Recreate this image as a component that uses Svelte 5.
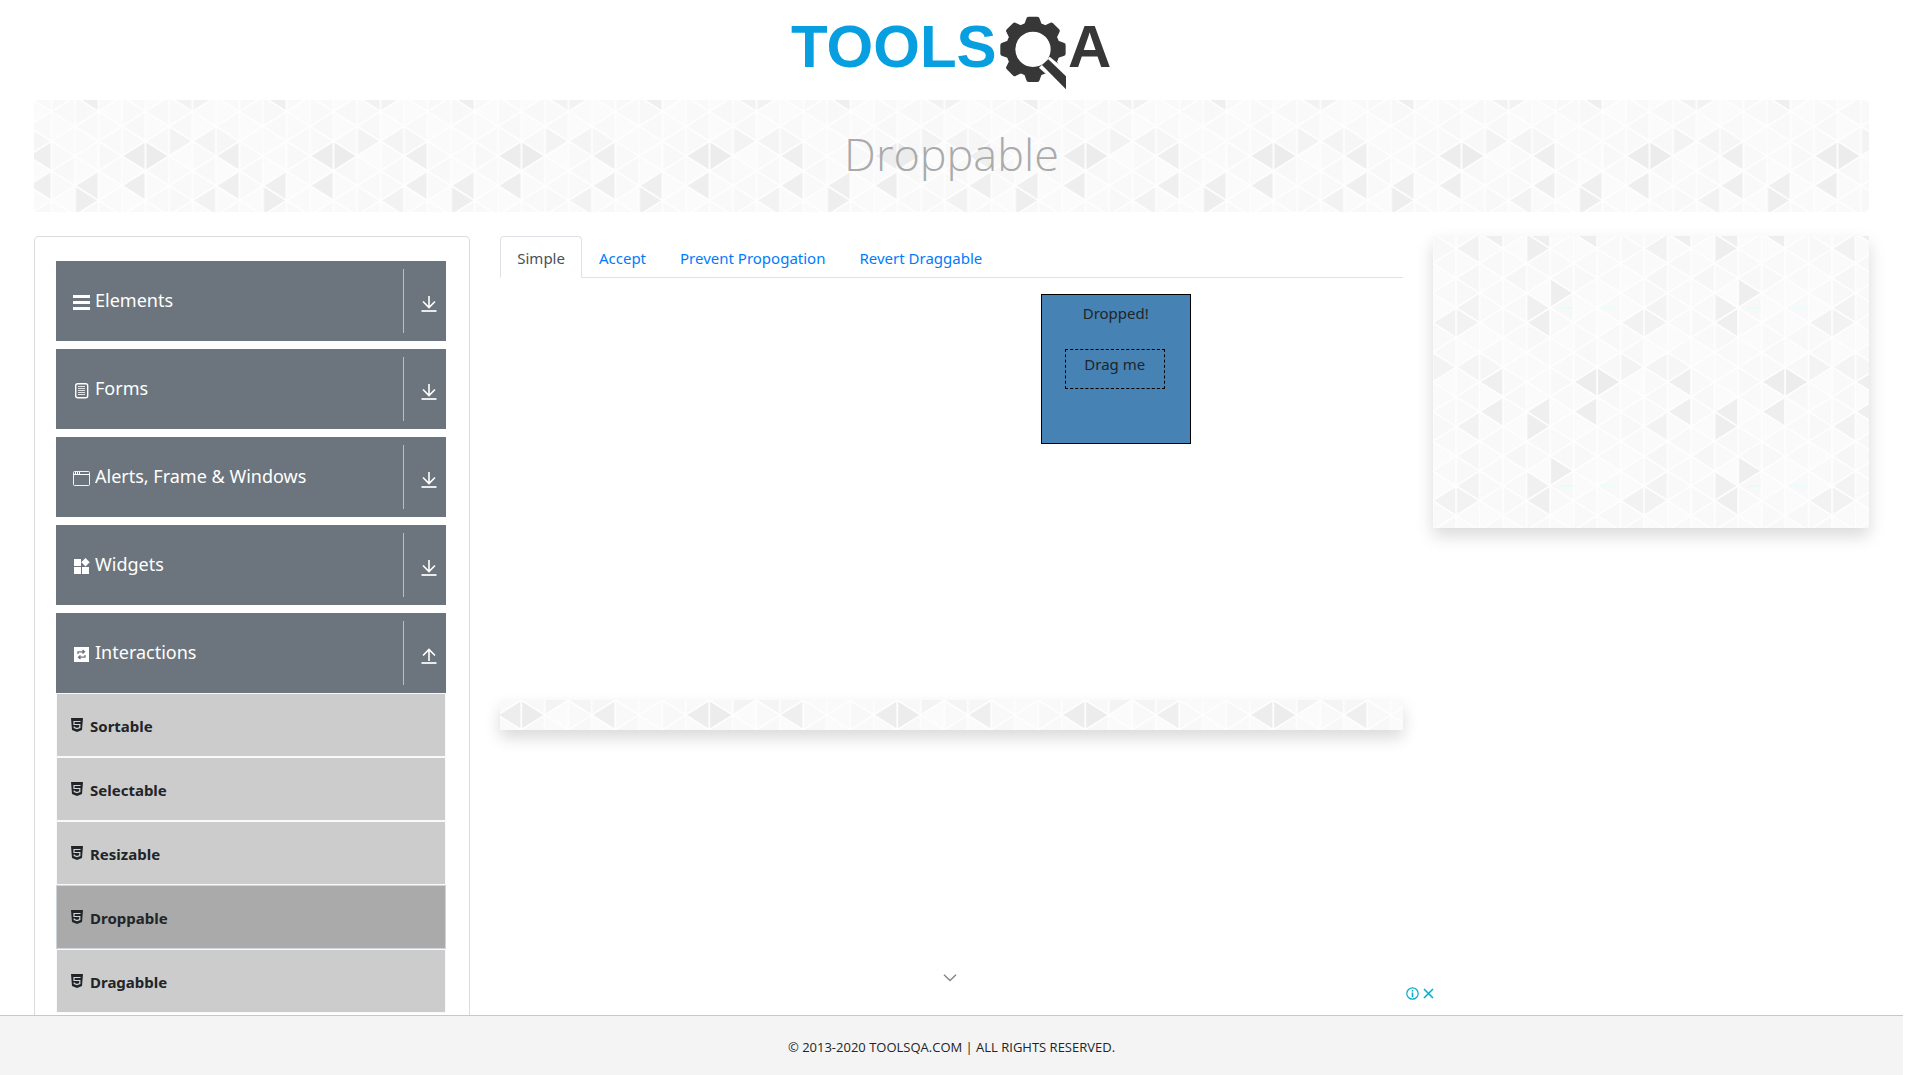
<script>
  const groups = ['Elements', 'Forms', 'Alerts, Frame & Windows', 'Widgets', 'Interactions'];
  const items = ['Sortable', 'Selectable', 'Resizable', 'Droppable', 'Dragabble'];
  const tabs = ['Simple', 'Accept', 'Prevent Propogation', 'Revert Draggable'];

  let current = $state('Droppable');
  let activeTab = $state('Simple');

  // Triangular wallpaper tile: 8 columns by 12 half-overlapping rows.
  const W = 188;
  const H = 178;
  const COL = W / 8;
  const ROW = H / 12;
  const shades = {
    '0-0': '#eeeeee', '7-1': '#f0f0f0', '7-2': '#efefef', '1-6': '#ededed', '2-6': '#ececec',
    '5-6': '#efefef', '5-8': '#efefef', '1-8': '#eeeeee', '7-8': '#efefef', '7-9': '#eeeeee',
    '4-9': '#f2f2f2', '4-1': '#f3f3f3', '4-11': '#f6f6f6', '4-2': '#f2f2f2', '3-2': '#f2f2f2',
    '3-5': '#f3f3f3', '4-5': '#f4f4f4', '6-11': '#f6f6f6', '5-5': '#f6f6f6'
  };
  const light = ['#f9f9f9', '#fbfbfb', '#f8f8f8', '#fafafa', '#f9f9f9'];
  const triangles = [];
  for (let c = -1; c <= 8; c++) {
    for (let r = -1; r <= 12; r++) {
      const mc = (c + 8) % 8;
      const mr = (r + 12) % 12;
      const left = -7 + c * COL;
      const right = left + COL;
      const y = r * ROW;
      const pointsRight = (mc + mr) % 2 === 0;
      const side = pointsRight ? left : right;
      const apex = pointsRight ? right : left;
      triangles.push({
        points: `${side},${y - ROW} ${side},${y + ROW} ${apex},${y}`,
        fill: shades[`${mc}-${mr}`] ?? light[(mc * 3 + mr * 2 + ((mc * mr) % 3)) % 5]
      });
    }
  }
</script>

{#snippet wallpaper()}
  <svg class="wallpaper" aria-hidden="true">
    <svg x="50%" y="50%" overflow="visible">
      <rect x="-3000" y="-1500" width="6000" height="3000" fill="url(#tile)" />
    </svg>
  </svg>
{/snippet}

<svg class="defs" width="0" height="0" aria-hidden="true">
  <defs>
    <pattern id="tile" x="-94" y="-89" width={W} height={H} patternUnits="userSpaceOnUse">
      {#each triangles as t}
        <polygon points={t.points} fill={t.fill} />
      {/each}
      {#each triangles as t}
        <polygon points={t.points} fill="none" stroke="#fefefe" stroke-width="1.400" stroke-linejoin="round" />
      {/each}
      <ellipse cx="9" cy="15" rx="7" ry="1" fill="#e4fdfd" />
      <ellipse cx="53" cy="15" rx="10" ry="2" fill="#effcfb" />
    </pattern>
  </defs>
</svg>

<div class="page">
  <header>
    <a href="#home" aria-label="Tools QA home">
      <svg width="322" height="84" viewBox="0 -10 322 84">
        <text class="word" x="0" y="51" fill="#079fe0">TOOLS</text>
        <g transform="translate(-12 -16) scale(0.3333)" fill="#373737">
          <g transform="translate(762 148)">
            {#each [0, 45, 90, 135, 180, 225, 270, 315] as a}
              <path transform="rotate({a})" d="M-27 -72L-20 -92Q-19 -98 -13 -98H13Q19 -98 20 -92L27 -72Z" />
            {/each}
            <circle r="67" fill="none" stroke="#373737" stroke-width="28" />
          </g>
          <path d="M780 203L812 170L876 222V290Z" fill="#fff" />
          <path d="M789 195L808 178L861 229V268Z" />
        </g>
        <text class="word" x="277" y="51" fill="#373737">A</text>
      </svg>
    </a>
  </header>

  <div class="banner">
    {@render wallpaper()}
    <h1>Droppable</h1>
  </div>

  <main>
    <div class="side">
      <nav class="card" aria-label="Sections">
        {#each groups as g, i}
          <button class="group">
            <span class="label">
              <svg class="ico" width="18" height="18" viewBox="0 0 18 18">
                {#if i === 0}
                  <path fill="#fff" d="M0 2h17v3H0zM0 8h17v3H0zM0 14h17v3H0z" />
                {:else if i === 1}
                  <rect x="2.700" y="2.700" width="12" height="14" rx="2" fill="none" stroke="#fff" stroke-width="1.400" />
                  <path stroke="#fff" stroke-opacity=".8" d="M5 5.500h7M5 7.500h7M5 9.500h7M5 11.500h7M5 13.500h7" />
                {:else if i === 2}
                  <rect x="0.500" y="2.500" width="16" height="14" rx="1" fill="none" stroke="#fff" stroke-opacity=".9" />
                  <path stroke="#fff" d="M1 5.500h15M2.500 3v2M4.500 3v2M6.500 3v2" />
                {:else if i === 3}
                  <path fill="#fff" d="M1 2h7v7H1zM1 10h7v7H1zM9 10h7v7H9zM12.500 1l4.200 4.300-4.200 4.200-4.200-4.200z" />
                {:else}
                  <rect x="1" y="2" width="15" height="15" fill="#fff" />
                  <path fill="none" stroke="#6c757d" stroke-width="1.300" d="M5 9V6.800h6M9.500 5l2 1.800-2 1.800M12 10v2.200H6M7.500 10.400l-2 1.800 2 1.800" />
                {/if}
              </svg>
              {g}
            </span>
            <span class="toggle">
              <svg width="16" height="18" viewBox="0 0 16 18" fill="none" stroke="#fff">
                {#if i === 4}
                  <path stroke-width="1.600" d="M8 14V2.500M2 8.500l6-6 6 6" />
                {:else}
                  <path stroke-width="1.600" d="M8 1V12.500M2 6.500l6 6 6-6" />
                {/if}
                <path stroke-width="2" stroke-opacity=".85" d="M.5 16h15" />
              </svg>
            </span>
          </button>
        {/each}
        <ul>
          {#each items as name}
            <li>
              <a class:active={current === name} href="#{name}" onclick={() => (current = name)}>
                <svg width="12" height="14" viewBox="0 0 12 14">
                  <path fill="#212529" d="M0 0h12l-1 12-5 2-5-2z" />
                  <path fill="none" stroke="#d4d4d4" stroke-width="1.200" d="M9.500 3.500H3v3h5.800v3L6 10.600 3.200 9.600V8.500" />
                </svg>
                {name}
              </a>
            </li>
          {/each}
        </ul>
      </nav>
    </div>

    <section class="center">
      <div class="tabs" role="tablist">
        {#each tabs as t}
          <button role="tab" aria-selected={activeTab === t} class:on={activeTab === t} onclick={() => (activeTab = t)}>{t}</button>
        {/each}
      </div>
      <div class="arena">
        <div class="drop">
          <p>Dropped!</p>
          <div class="drag">Drag me</div>
        </div>
      </div>
      <div class="strip">{@render wallpaper()}</div>
    </section>

    <aside class="side">
      <div class="promo">{@render wallpaper()}</div>
    </aside>
  </main>

  <footer>
    <div class="anchor">
      <button class="fold" aria-label="Collapse">
        <svg width="14" height="8" viewBox="0 0 14 8" fill="none" stroke="#858585" stroke-width="1.400"><path d="M1 .8l6 5.800 6-5.800" /></svg>
      </button>
      <div class="ad">
        <button aria-label="Ad information">
          <svg width="13" height="13" viewBox="0 0 13 13" fill="none" stroke="#00aecd"><circle cx="6.500" cy="6.500" r="5.700" stroke-width="1.200" /><path stroke-width="1.600" d="M6.500 3v1.500M6.500 5.500V10" /></svg>
        </button>
        <button aria-label="Close ad">
          <svg width="11" height="13" viewBox="0 0 11 13" fill="none" stroke="#00aecd" stroke-width="1.500"><path d="M1 2l9 9M10 2l-9 9" /></svg>
        </button>
      </div>
    </div>
    <span>© 2013-2020 TOOLSQA.COM | ALL RIGHTS RESERVED.</span>
  </footer>
</div>

<style>
  :global(body) {
    margin: 0;
    background: #fff;
    color: #212529;
    font-family: 'Noto Sans', 'Open Sans', sans-serif;
    font-size: 15px;
    line-height: 24px;
  }
  * { box-sizing: border-box; }
  button { font: inherit; color: inherit; border: 0; padding: 0; background: none; cursor: pointer; }
  svg { display: block; }
  .defs { position: absolute; }
  .page { height: 100vh; margin-right: 17px; display: flex; flex-direction: column; overflow: hidden; }
  header { flex: none; height: 100px; padding: 6px 34px 0; display: flex; justify-content: center; align-items: flex-start; }
  .word { font-family: 'Liberation Sans', sans-serif; font-weight: 700; font-size: 60px; }
  .banner {
    position: relative;
    flex: none;
    height: 112px;
    margin: 0 34px 24px;
    padding-bottom: 4px;
    display: flex;
    justify-content: center;
    align-items: center;
  }
  .wallpaper { position: absolute; inset: 0; width: 100%; height: 100%; overflow: hidden; }
  h1 { position: relative; margin: 0; font-family: 'Open Sans', sans-serif; font-weight: 300; font-size: 45px; line-height: 56px; color: #aaa; }
  main { flex: 1; min-height: 0; display: flex; padding: 0 19px; }
  .side { flex: 0 0 25%; padding: 0 15px; display: flex; flex-direction: column; }
  .center { flex: 0 0 50%; padding: 0 15px; }
  .card {
    flex: 1;
    padding: 24px 23px 0 21px;
    border: 1px solid #dcdcdd;
    border-bottom: 0;
    border-radius: 5px 5px 0 0;
    display: flex;
    flex-direction: column;
    gap: 8px;
  }
  .group {
    flex: none;
    height: 80px;
    padding: 8px 0 8px 17px;
    display: flex;
    justify-content: space-between;
    background: #6c757d;
    color: #fff;
    font-size: 18px;
    text-align: left;
  }
  .label { display: flex; gap: 4px; align-items: center; padding-bottom: 2px; }
  .ico { margin-top: 4px; }
  .toggle { width: 43px; border-left: 1px solid #bbbfc3; padding: 26px 0 0 17px; }
  ul { list-style: none; margin: -8px 0 0; padding: 0; }
  li a {
    height: 64px;
    display: flex;
    align-items: center;
    gap: 7px;
    padding: 2px 14px 0;
    border: 1px solid #f8f9fa;
    background: #ccc;
    color: #212529;
    font-weight: 700;
    text-decoration: none;
  }
  li svg { margin-bottom: 2px; }
  li a.active { background: #aaa; border-color: #ced4da; }
  .tabs { display: flex; border-bottom: 1px solid #dee2e6; }
  .tabs button {
    padding: 9px 16px 7px;
    margin-bottom: -1px;
    border: 1px solid transparent;
    border-radius: 4px 4px 0 0;
    color: #007bff;
  }
  .tabs .on { color: #495057; background: #fff; border-color: #dee2e6 #dee2e6 #fff; }
  .arena { height: 422px; padding-top: 16px; }
  .drop {
    width: 150px;
    height: 150px;
    margin-left: calc(60% - 1px);
    padding: 6px 0 0 23px;
    border: 1px solid #000;
    background: #4682b4;
  }
  .drop p { margin: 0 23px 24px 0; text-align: center; }
  .drag { width: 100px; height: 40px; padding-top: 2px; border: 1px dashed #000; text-align: center; }
  .strip, .promo { position: relative; box-shadow: 0 8px 16px rgba(0, 0, 0, 0.15); }
  .strip { height: 30px; }
  .promo { height: 292px; }
  footer {
    position: relative;
    flex: none;
    height: 60px;
    padding: 2px 34px 0;
    display: flex;
    align-items: center;
    justify-content: center;
    background: #f4f4f4;
    border-top: 1px solid #c8c8c8;
    font-family: 'Open Sans', 'Noto Sans', sans-serif;
    font-size: 13px;
  }
  .anchor {
    position: absolute;
    bottom: 100%;
    width: 970px;
    padding: 0 3px 16px 0;
    display: flex;
    flex-direction: column;
    gap: 5px;
  }
  .fold { align-self: center; }
  .ad { display: flex; justify-content: flex-end; gap: 4px; }
</style>
